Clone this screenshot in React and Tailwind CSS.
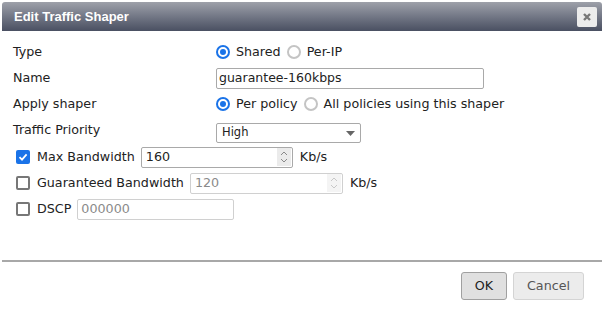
import React from "react";

const font = { fontFamily: '"DejaVu Sans", Verdana, sans-serif' };

function Radio({ checked }) {
  return checked ? (
    <span className="inline-flex w-[14px] h-[14px] rounded-full border-2 border-[#1a73e8] items-center justify-center shrink-0">
      <span className="w-[6px] h-[6px] rounded-full bg-[#1a73e8]" />
    </span>
  ) : (
    <span className="inline-block w-[14px] h-[14px] rounded-full border-2 border-[#c4c4c4] bg-white shrink-0" />
  );
}

function Checkbox({ checked }) {
  return checked ? (
    <span className="inline-flex w-[14px] h-[14px] rounded-[2px] bg-[#1a73e8] items-center justify-center shrink-0">
      <svg width="10" height="10" viewBox="0 0 10 10">
        <path d="M1.5 5.2 L4 7.6 L8.6 2.4" fill="none" stroke="white" strokeWidth="1.8" />
      </svg>
    </span>
  ) : (
    <span className="inline-block w-[14px] h-[14px] rounded-[2px] border-2 border-[#777] bg-white shrink-0" />
  );
}

function Spinner({ disabled }) {
  const c = disabled ? "#c8c8c8" : "#8a8a8a";
  return (
    <span className={`flex flex-col items-center justify-center w-[14px] h-[18px] ${disabled ? "bg-[#f4f4f4]" : "bg-[#ebebeb]"}`}>
      <svg width="8" height="14" viewBox="0 0 8 14">
        <path d="M1 5 L4 2 L7 5" fill="none" stroke={c} strokeWidth="1" />
        <path d="M1 9 L4 12 L7 9" fill="none" stroke={c} strokeWidth="1" />
      </svg>
    </span>
  );
}

export default function App() {
  return (
    <div className="w-[604px] h-[313px] bg-white relative text-[12.7px] text-[#222]" style={font}>
      <div className="mx-[2px] mt-[2px] h-[29px] rounded-t-[3px] bg-gradient-to-b from-[#9ea1aa] to-[#4a5062] flex items-center justify-between pl-[12px] pr-[5px]">
        <span className="text-white font-bold text-[13px] pt-[1px]" style={{ fontFamily: '"Liberation Sans", Arial, sans-serif' }}>Edit Traffic Shaper</span>
        <span className="w-[20px] h-[20px] rounded-[2px] bg-[#ececec] flex items-center justify-center">
          <svg width="10" height="10" viewBox="0 0 10 10">
            <path d="M2 2 L8 8 M8 2 L2 8" stroke="#777" strokeWidth="2.4" />
          </svg>
        </span>
      </div>

      <div className="pl-[13px] pt-[8px] flex flex-col">
        <div className="flex items-center h-[26px]">
          <span className="w-[203px]">Type</span>
          <span className="flex items-center gap-[6px]">
            <Radio checked />
            <span>Shared</span>
            <Radio />
            <span>Per-IP</span>
          </span>
        </div>
        <div className="flex items-center h-[26px]">
          <span className="w-[203px]">Name</span>
          <span className="w-[268px] h-[21px] border border-[#a9a9a9] rounded-[2px] flex items-center px-[2px] text-[12.5px]">guarantee-160kbps</span>
        </div>
        <div className="flex items-center h-[26px]">
          <span className="w-[203px]">Apply shaper</span>
          <span className="flex items-center gap-[6px]">
            <Radio checked />
            <span>Per policy</span>
            <Radio />
            <span>All policies using this shaper</span>
          </span>
        </div>
        <div className="flex items-center h-[26px]">
          <span className="w-[203px]">Traffic Priority</span>
          <span className="w-[145px] h-[20px] mt-[6px] border border-[#a9a9a9] rounded-[2px] flex items-center justify-between pl-[5px] pr-[5px] text-[11.5px]">
            <span>High</span>
            <svg width="9" height="5" viewBox="0 0 9 5"><path d="M0 0 L9 0 L4.5 5 Z" fill="#666" /></svg>
          </span>
        </div>
        <div className="flex items-center h-[26px] mt-[1px] pl-[3px]">
          <Checkbox checked />
          <span className="ml-[7px]">Max Bandwidth</span>
          <span className="ml-[6px] w-[152px] h-[21px] border border-[#a9a9a9] rounded-[2px] flex items-center justify-between pl-[4px] pr-[1px]">
            <span>160</span>
            <Spinner />
          </span>
          <span className="ml-[7px]">Kb/s</span>
        </div>
        <div className="flex items-center h-[26px] pl-[3px]">
          <Checkbox />
          <span className="ml-[7px]">Guaranteed Bandwidth</span>
          <span className="ml-[6px] w-[153px] h-[21px] border border-[#d0d0d0] rounded-[2px] flex items-center justify-between pl-[4px] pr-[1px] text-[#8a8a8a]">
            <span>120</span>
            <Spinner disabled />
          </span>
          <span className="ml-[7px]">Kb/s</span>
        </div>
        <div className="flex items-center h-[26px] pl-[3px]">
          <Checkbox />
          <span className="ml-[7px]">DSCP</span>
          <span className="ml-[6px] w-[157px] h-[21px] border border-[#d0d0d0] rounded-[2px] flex items-center pl-[3px] text-[#8a8a8a]">000000</span>
        </div>
      </div>

      <div className="absolute left-[2px] right-[2px] top-[258px] h-[2px] bg-[#a8a8a8]" />
      <div className="absolute top-[270px] right-[20px] flex gap-[6px]">
        <span className="w-[46px] h-[28px] border border-[#a0a0a0] rounded-[3px] bg-[#e0e0e0] flex items-center justify-center">OK</span>
        <span className="w-[71px] h-[28px] border border-[#d4d4d4] rounded-[3px] bg-[#ececec] flex items-center justify-center text-[#555]">Cancel</span>
      </div>
    </div>
  );
}
